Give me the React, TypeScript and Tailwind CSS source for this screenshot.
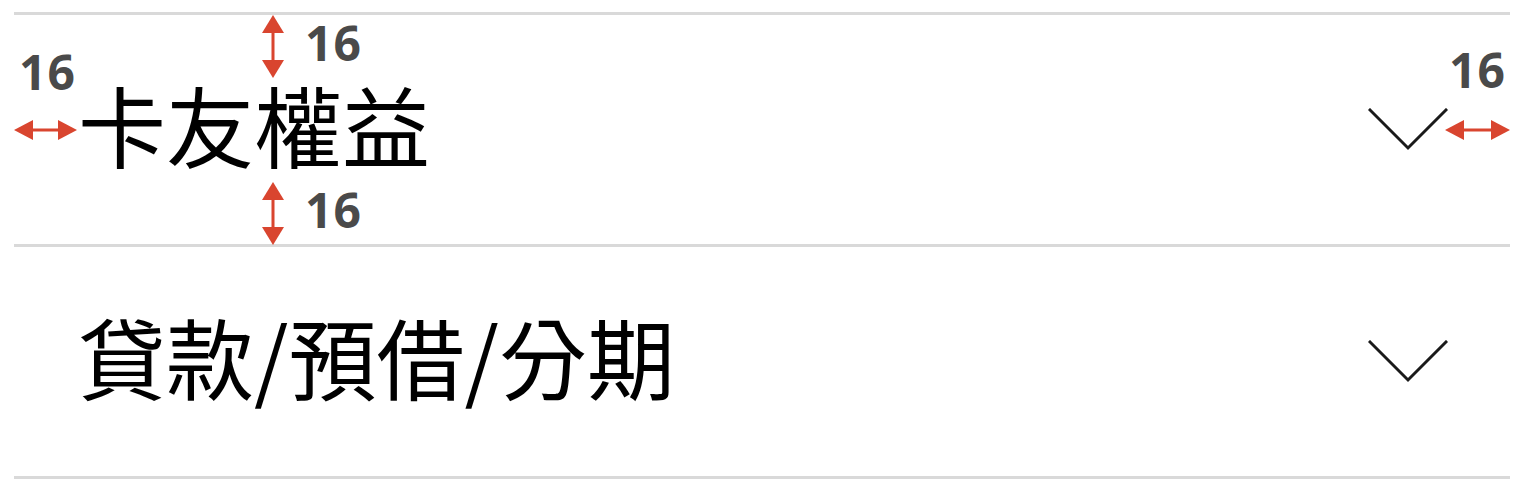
import React from "react";

// ── Types ─────────────────────────────────────────────────────────────────────

interface MenuItem {
  id: string;
  label: string;
}

const ITEMS: MenuItem[] = [
  { id: "benefits", label: "卡友權益" },
  { id: "loan", label: "貸款/預借/分期" },
];

const RED = "#d9452f";

// ── Chevron ───────────────────────────────────────────────────────────────────

function Chevron() {
  return (
    <svg width="80" height="44" viewBox="0 0 80 44" fill="none" aria-hidden="true">
      <polyline
        points="2,2 40,40 78,2"
        stroke="#1a1a1a"
        strokeWidth="3"
        strokeLinecap="square"
        fill="none"
      />
    </svg>
  );
}

// ── Spec arrows (annotation overlay) ──────────────────────────────────────────

function HArrow({ width }: { width: number }) {
  const h = 20;
  const head = 19;
  return (
    <svg width={width} height={h} viewBox={`0 0 ${width} ${h}`} aria-hidden="true">
      <polygon points={`0,${h / 2} ${head},0 ${head},${h}`} fill={RED} />
      <polygon points={`${width},${h / 2} ${width - head},0 ${width - head},${h}`} fill={RED} />
      <rect x={head - 1} y={h / 2 - 1.5} width={width - head * 2 + 2} height="3" fill={RED} />
    </svg>
  );
}

function VArrow({ height }: { height: number }) {
  const w = 22;
  const head = 18;
  return (
    <svg width={w} height={height} viewBox={`0 0 ${w} ${height}`} aria-hidden="true">
      <polygon points={`${w / 2},0 0,${head} ${w},${head}`} fill={RED} />
      <polygon points={`${w / 2},${height} 0,${height - head} ${w},${height - head}`} fill={RED} />
      <rect x={w / 2 - 1.5} y={head - 1} width="3" height={height - head * 2 + 2} fill={RED} />
    </svg>
  );
}

function Label() {
  return (
    <span className="block text-[48px] leading-none font-bold tracking-[1px] text-[#4a4a4a] [font-family:'Open_Sans',sans-serif]">
      16
    </span>
  );
}

// ── Main ──────────────────────────────────────────────────────────────────────

export default function App() {
  return (
    <div className="relative w-[1528px] h-[498px] bg-white overflow-hidden">
      <div className="pt-[12px] pl-[14px] pr-[18px]">
        <div className="border-t-[3px] border-[#d9d9d9]">
          {ITEMS.map((item) => (
            <div
              key={item.id}
              className="h-[232px] border-b-[3px] border-[#d9d9d9] flex items-center justify-between pl-[64px] pr-[62px]"
            >
              <span className="pb-[14px] text-[88px] leading-none text-black [font-family:'Noto_Sans_CJK_TC','Noto_Sans_CJK_SC',sans-serif]">
                {item.label}
              </span>
              <Chevron />
            </div>
          ))}
        </div>
      </div>

      {/* Spacing annotations */}
      <div className="absolute left-[14px] top-[120px]">
        <HArrow width={63} />
      </div>
      <div className="absolute left-[19px] top-[48px]">
        <Label />
      </div>

      <div className="absolute left-[262px] top-[15px]">
        <VArrow height={63} />
      </div>
      <div className="absolute left-[305px] top-[19px]">
        <Label />
      </div>

      <div className="absolute left-[262px] top-[182px]">
        <VArrow height={63} />
      </div>
      <div className="absolute left-[305px] top-[186px]">
        <Label />
      </div>

      <div className="absolute left-[1445px] top-[120px]">
        <HArrow width={65} />
      </div>
      <div className="absolute left-[1449px] top-[46px]">
        <Label />
      </div>
    </div>
  );
}
